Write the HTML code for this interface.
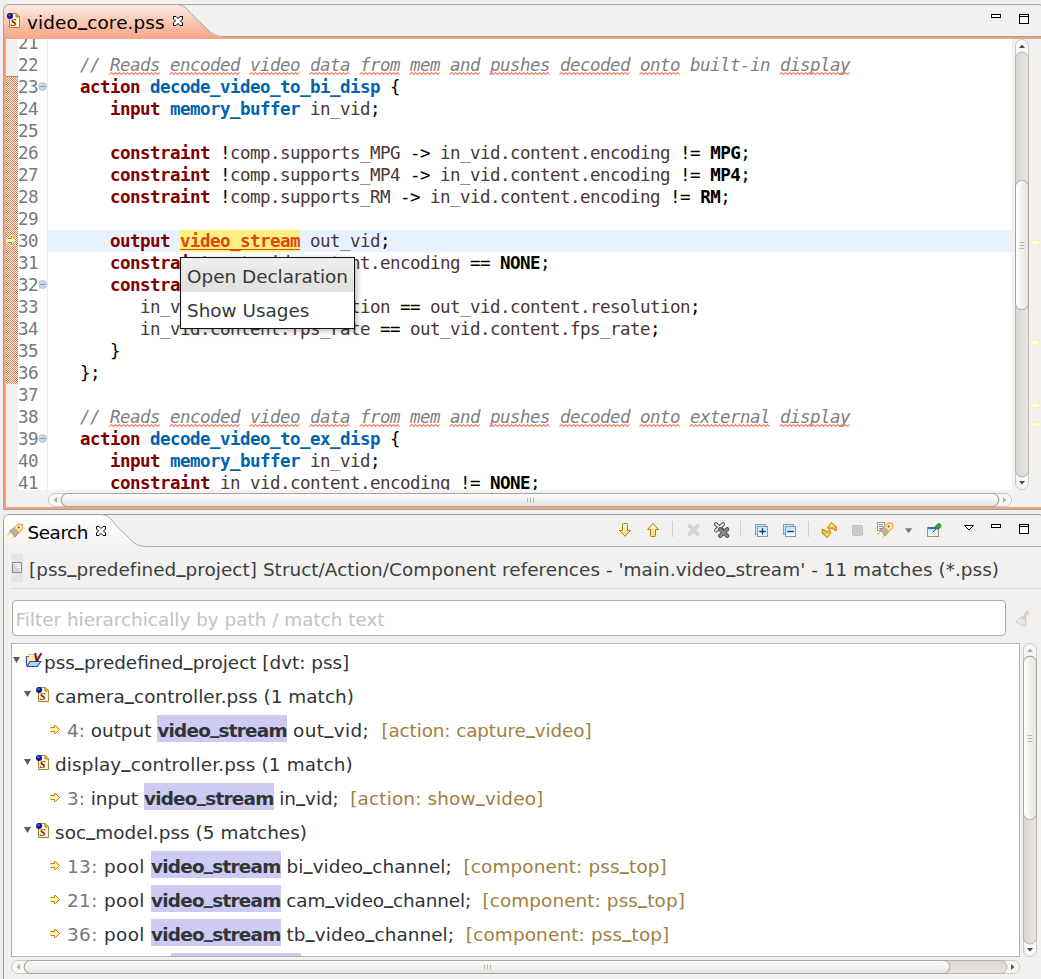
<!DOCTYPE html>
<html lang="en">
<head>
<meta charset="utf-8">
<title>video_core.pss - Search</title>
<style>
*{box-sizing:border-box;margin:0;padding:0}
html,body{width:1041px;height:979px;overflow:hidden;background:#F1F0EE}
body{position:relative;font-family:"DejaVu Sans","Liberation Sans",sans-serif;font-size:18.4px;color:#2f3436}
.abs{position:absolute}
svg{position:absolute;left:0;top:0;overflow:visible}
/* ---------- editor ---------- */
#edwhite{left:18px;top:39px;width:994px;height:451px;background:#fff}
#ruler{left:6px;top:39px;width:12px;height:451px;background:#F1F0EF}
#chg{left:6px;top:76px;width:12px;height:308px;
 background-color:#fff;
 background-image:linear-gradient(45deg,#F0703A 25%,transparent 25%,transparent 75%,#F0703A 75%),linear-gradient(45deg,#F0703A 25%,transparent 25%,transparent 75%,#F0703A 75%);
 background-size:2px 2px;background-position:0 0,1px 1px;border-top:1px solid #F0703A}
#sep{left:47px;top:39px;width:1px;height:451px;background:#ECECEC}
#clip{left:18px;top:39px;width:994px;height:451px;overflow:hidden}
#nums,#code{position:absolute;top:-7px;font-family:"DejaVu Sans Mono","Liberation Mono",monospace;font-size:17.5px;letter-spacing:-0.535px;line-height:22px}
#nums{left:0;width:20px;color:#787878}
#code{left:30px;width:964px;color:#000}
.ln{height:22px;padding-left:2px;white-space:pre}
#nums .ln{padding-left:0}
.cur{background:#E8F2FE}
.k{color:#7F0000}
.t{color:#0064AE}
.c{color:#000}
.i{color:#4A3636}
.m{color:#7F7F7F;font-style:italic}
.hl{color:#D8481C;background:#FFF07E;text-decoration:underline;text-decoration-thickness:1px;text-underline-offset:2px;display:inline-block;height:22px}
/* popup */
#pop{left:180px;top:257px;width:175px;height:72px;background:#fff;border:1px solid #111;box-shadow:2px 2px 6px rgba(0,0,0,.28)}
#pop div{height:34px;line-height:34px;padding:2px 0 0 6px;white-space:pre;color:#33383a}
#pop .sel{background:linear-gradient(#EFEEEC,#E1E0DD)}
/* ---------- search ---------- */
#desc{left:29px;top:553px;line-height:34px;white-space:pre;color:#3a3f41;letter-spacing:.05px}
#descsep{left:11px;top:588px;width:1030px;height:1px;background:#DAD8D5}
#filter{left:12px;top:600px;width:994px;height:36px;border:1px solid #ADA9A3;border-radius:4px;background:#fff;line-height:34px;padding:1.6px 0 0 2.5px;color:#C2C2C2;white-space:pre}
#tree{left:11px;top:643px;width:1009px;height:314px;border:1px solid #B4B0AA;background:#fff;overflow:hidden}
.row{position:absolute;left:0;height:34px;line-height:34px;white-space:pre;color:#2f3436}
.n{color:#777}
.q{color:#A08040}
.u{position:relative;top:-3px;font-weight:bold}
.mt{font-weight:bold;background:#CDCBF3;padding:5px 0 1px 0;letter-spacing:-0.75px}
</style>
</head>
<body>
<!-- ================= EDITOR PANE ================= -->
<svg id="edchrome" width="1041" height="512" viewBox="0 0 1041 512">
 <defs>
  <linearGradient id="tabg" x1="0" y1="0" x2="0" y2="1">
   <stop offset="0" stop-color="#FCEAE2"/><stop offset="1" stop-color="#F5A583"/>
  </linearGradient>
 </defs>
 <!-- pane background -->
 <path d="M3.5,509.5 V11 Q3.5,4.5 10,4.5 H1039 Q1043,4.8 1046,9 V509.5 Z" fill="#F2F1EF" stroke="#A5A29E"/>
 <!-- orange frame -->
 <rect x="4" y="37" width="1037" height="2" fill="#F4A281"/>
 <rect x="4" y="39" width="2" height="470" fill="#F4A281"/>
 <rect x="4" y="507" width="1037" height="2" fill="#F4A281"/>
 <line x1="222" y1="36.5" x2="1041" y2="36.5" stroke="#A0A19E"/>
 <!-- active tab -->
 <path d="M4,39 V11 Q4,5 10,5 H175 C185,5 188,10.5 192,14.5 L205,27 C209,31 213,37 224,37 V39 Z" fill="url(#tabg)"/>
 <path d="M175,4.5 C185,4.5 188,10.5 192,14.5 L205,27 C209,31 213,36.5 224,36.5" fill="none" stroke="#A9A6A2"/>
</svg>
<div class="abs" id="ruler"></div>
<div class="abs" id="edwhite"></div>
<div class="abs" id="chg"></div>
<div class="abs" id="sep"></div>
<div class="abs" id="clip">
<div id="nums">
<div class="ln">21</div>
<div class="ln">22</div>
<div class="ln">23</div>
<div class="ln">24</div>
<div class="ln">25</div>
<div class="ln">26</div>
<div class="ln">27</div>
<div class="ln">28</div>
<div class="ln">29</div>
<div class="ln">30</div>
<div class="ln">31</div>
<div class="ln">32</div>
<div class="ln">33</div>
<div class="ln">34</div>
<div class="ln">35</div>
<div class="ln">36</div>
<div class="ln">37</div>
<div class="ln">38</div>
<div class="ln">39</div>
<div class="ln">40</div>
<div class="ln">41</div>
</div>
<div id="code">
<div class="ln"></div>
<div class="ln">   <i class="m">// Reads encoded video data from mem and pushes decoded onto built-in display</i></div>
<div class="ln">   <b class="k">action</b> <b class="t">decode_video_to_bi_disp</b> {</div>
<div class="ln">      <b class="k">input</b> <b class="t">memory_buffer</b> <span class="i">in_vid</span>;</div>
<div class="ln"></div>
<div class="ln">      <b class="k">constraint</b> !<span class="i">comp.supports_MPG</span> -&gt; <span class="i">in_vid.content.encoding</span> != <b class="c">MPG</b>;</div>
<div class="ln">      <b class="k">constraint</b> !<span class="i">comp.supports_MP4</span> -&gt; <span class="i">in_vid.content.encoding</span> != <b class="c">MP4</b>;</div>
<div class="ln">      <b class="k">constraint</b> !<span class="i">comp.supports_RM</span> -&gt; <span class="i">in_vid.content.encoding</span> != <b class="c">RM</b>;</div>
<div class="ln"></div>
<div class="ln cur">      <b class="k">output</b> <b class="hl">video_stream</b> <span class="i">out_vid</span>;</div>
<div class="ln">      <b class="k">constraint</b> <span class="i">out_vid.content.encoding</span> == <b class="c">NONE</b>;</div>
<div class="ln">      <b class="k">constraint</b> {</div>
<div class="ln">         <span class="i">in_vid.content.resolution</span> == <span class="i">out_vid.content.resolution</span>;</div>
<div class="ln">         <span class="i">in_vid.content.fps_rate</span> == <span class="i">out_vid.content.fps_rate</span>;</div>
<div class="ln">      }</div>
<div class="ln">   };</div>
<div class="ln"></div>
<div class="ln">   <i class="m">// Reads encoded video data from mem and pushes decoded onto external display</i></div>
<div class="ln">   <b class="k">action</b> <b class="t">decode_video_to_ex_disp</b> {</div>
<div class="ln">      <b class="k">input</b> <b class="t">memory_buffer</b> <span class="i">in_vid</span>;</div>
<div class="ln">      <b class="k">constraint</b> <span class="i">in_vid.content.encoding</span> != <b class="c">NONE</b>;</div>
</div>
</div>
<svg id="squig" width="1041" height="512" viewBox="0 0 1041 512" fill="none" stroke="#F68A60" stroke-width="1.15">
<polyline points="109.5,74.5 111.5,72.5 113.5,74.5 115.5,72.5 117.5,74.5 119.5,72.5 121.5,74.5 123.5,72.5 125.5,74.5 127.5,72.5 129.5,74.5 131.5,72.5 133.5,74.5 135.5,72.5 137.5,74.5 139.5,72.5 141.5,74.5 143.5,72.5 145.5,74.5 147.5,72.5 149.5,74.5 151.5,72.5 153.5,74.5 155.5,72.5 157.5,74.5 159.5,72.5"/><polyline points="169.5,74.5 171.5,72.5 173.5,74.5 175.5,72.5 177.5,74.5 179.5,72.5 181.5,74.5 183.5,72.5 185.5,74.5 187.5,72.5 189.5,74.5 191.5,72.5 193.5,74.5 195.5,72.5 197.5,74.5 199.5,72.5 201.5,74.5 203.5,72.5 205.5,74.5 207.5,72.5 209.5,74.5 211.5,72.5 213.5,74.5 215.5,72.5 217.5,74.5 219.5,72.5 221.5,74.5 223.5,72.5 225.5,74.5 227.5,72.5 229.5,74.5 231.5,72.5 233.5,74.5 235.5,72.5 237.5,74.5 239.5,72.5"/><polyline points="249.5,74.5 251.5,72.5 253.5,74.5 255.5,72.5 257.5,74.5 259.5,72.5 261.5,74.5 263.5,72.5 265.5,74.5 267.5,72.5 269.5,74.5 271.5,72.5 273.5,74.5 275.5,72.5 277.5,74.5 279.5,72.5 281.5,74.5 283.5,72.5 285.5,74.5 287.5,72.5 289.5,74.5 291.5,72.5 293.5,74.5 295.5,72.5 297.5,74.5 299.5,72.5"/><polyline points="309.5,74.5 311.5,72.5 313.5,74.5 315.5,72.5 317.5,74.5 319.5,72.5 321.5,74.5 323.5,72.5 325.5,74.5 327.5,72.5 329.5,74.5 331.5,72.5 333.5,74.5 335.5,72.5 337.5,74.5 339.5,72.5 341.5,74.5 343.5,72.5 345.5,74.5 347.5,72.5 349.5,74.5"/><polyline points="359.5,74.5 361.5,72.5 363.5,74.5 365.5,72.5 367.5,74.5 369.5,72.5 371.5,74.5 373.5,72.5 375.5,74.5 377.5,72.5 379.5,74.5 381.5,72.5 383.5,74.5 385.5,72.5 387.5,74.5 389.5,72.5 391.5,74.5 393.5,72.5 395.5,74.5 397.5,72.5 399.5,74.5"/><polyline points="409.5,74.5 411.5,72.5 413.5,74.5 415.5,72.5 417.5,74.5 419.5,72.5 421.5,74.5 423.5,72.5 425.5,74.5 427.5,72.5 429.5,74.5 431.5,72.5 433.5,74.5 435.5,72.5 437.5,74.5 439.5,72.5"/><polyline points="449.5,74.5 451.5,72.5 453.5,74.5 455.5,72.5 457.5,74.5 459.5,72.5 461.5,74.5 463.5,72.5 465.5,74.5 467.5,72.5 469.5,74.5 471.5,72.5 473.5,74.5 475.5,72.5 477.5,74.5 479.5,72.5"/><polyline points="489.5,74.5 491.5,72.5 493.5,74.5 495.5,72.5 497.5,74.5 499.5,72.5 501.5,74.5 503.5,72.5 505.5,74.5 507.5,72.5 509.5,74.5 511.5,72.5 513.5,74.5 515.5,72.5 517.5,74.5 519.5,72.5 521.5,74.5 523.5,72.5 525.5,74.5 527.5,72.5 529.5,74.5 531.5,72.5 533.5,74.5 535.5,72.5 537.5,74.5 539.5,72.5 541.5,74.5 543.5,72.5 545.5,74.5 547.5,72.5 549.5,74.5"/><polyline points="559.5,74.5 561.5,72.5 563.5,74.5 565.5,72.5 567.5,74.5 569.5,72.5 571.5,74.5 573.5,72.5 575.5,74.5 577.5,72.5 579.5,74.5 581.5,72.5 583.5,74.5 585.5,72.5 587.5,74.5 589.5,72.5 591.5,74.5 593.5,72.5 595.5,74.5 597.5,72.5 599.5,74.5 601.5,72.5 603.5,74.5 605.5,72.5 607.5,74.5 609.5,72.5 611.5,74.5 613.5,72.5 615.5,74.5 617.5,72.5 619.5,74.5 621.5,72.5 623.5,74.5 625.5,72.5 627.5,74.5 629.5,72.5"/><polyline points="639.5,74.5 641.5,72.5 643.5,74.5 645.5,72.5 647.5,74.5 649.5,72.5 651.5,74.5 653.5,72.5 655.5,74.5 657.5,72.5 659.5,74.5 661.5,72.5 663.5,74.5 665.5,72.5 667.5,74.5 669.5,72.5 671.5,74.5 673.5,72.5 675.5,74.5 677.5,72.5 679.5,74.5"/><polyline points="779.5,74.5 781.5,72.5 783.5,74.5 785.5,72.5 787.5,74.5 789.5,72.5 791.5,74.5 793.5,72.5 795.5,74.5 797.5,72.5 799.5,74.5 801.5,72.5 803.5,74.5 805.5,72.5 807.5,74.5 809.5,72.5 811.5,74.5 813.5,72.5 815.5,74.5 817.5,72.5 819.5,74.5 821.5,72.5 823.5,74.5 825.5,72.5 827.5,74.5 829.5,72.5 831.5,74.5 833.5,72.5 835.5,74.5 837.5,72.5 839.5,74.5 841.5,72.5 843.5,74.5 845.5,72.5 847.5,74.5 849.5,72.5"/><polyline points="109.5,426.5 111.5,424.5 113.5,426.5 115.5,424.5 117.5,426.5 119.5,424.5 121.5,426.5 123.5,424.5 125.5,426.5 127.5,424.5 129.5,426.5 131.5,424.5 133.5,426.5 135.5,424.5 137.5,426.5 139.5,424.5 141.5,426.5 143.5,424.5 145.5,426.5 147.5,424.5 149.5,426.5 151.5,424.5 153.5,426.5 155.5,424.5 157.5,426.5 159.5,424.5"/><polyline points="169.5,426.5 171.5,424.5 173.5,426.5 175.5,424.5 177.5,426.5 179.5,424.5 181.5,426.5 183.5,424.5 185.5,426.5 187.5,424.5 189.5,426.5 191.5,424.5 193.5,426.5 195.5,424.5 197.5,426.5 199.5,424.5 201.5,426.5 203.5,424.5 205.5,426.5 207.5,424.5 209.5,426.5 211.5,424.5 213.5,426.5 215.5,424.5 217.5,426.5 219.5,424.5 221.5,426.5 223.5,424.5 225.5,426.5 227.5,424.5 229.5,426.5 231.5,424.5 233.5,426.5 235.5,424.5 237.5,426.5 239.5,424.5"/><polyline points="249.5,426.5 251.5,424.5 253.5,426.5 255.5,424.5 257.5,426.5 259.5,424.5 261.5,426.5 263.5,424.5 265.5,426.5 267.5,424.5 269.5,426.5 271.5,424.5 273.5,426.5 275.5,424.5 277.5,426.5 279.5,424.5 281.5,426.5 283.5,424.5 285.5,426.5 287.5,424.5 289.5,426.5 291.5,424.5 293.5,426.5 295.5,424.5 297.5,426.5 299.5,424.5"/><polyline points="309.5,426.5 311.5,424.5 313.5,426.5 315.5,424.5 317.5,426.5 319.5,424.5 321.5,426.5 323.5,424.5 325.5,426.5 327.5,424.5 329.5,426.5 331.5,424.5 333.5,426.5 335.5,424.5 337.5,426.5 339.5,424.5 341.5,426.5 343.5,424.5 345.5,426.5 347.5,424.5 349.5,426.5"/><polyline points="359.5,426.5 361.5,424.5 363.5,426.5 365.5,424.5 367.5,426.5 369.5,424.5 371.5,426.5 373.5,424.5 375.5,426.5 377.5,424.5 379.5,426.5 381.5,424.5 383.5,426.5 385.5,424.5 387.5,426.5 389.5,424.5 391.5,426.5 393.5,424.5 395.5,426.5 397.5,424.5 399.5,426.5"/><polyline points="409.5,426.5 411.5,424.5 413.5,426.5 415.5,424.5 417.5,426.5 419.5,424.5 421.5,426.5 423.5,424.5 425.5,426.5 427.5,424.5 429.5,426.5 431.5,424.5 433.5,426.5 435.5,424.5 437.5,426.5 439.5,424.5"/><polyline points="449.5,426.5 451.5,424.5 453.5,426.5 455.5,424.5 457.5,426.5 459.5,424.5 461.5,426.5 463.5,424.5 465.5,426.5 467.5,424.5 469.5,426.5 471.5,424.5 473.5,426.5 475.5,424.5 477.5,426.5 479.5,424.5"/><polyline points="489.5,426.5 491.5,424.5 493.5,426.5 495.5,424.5 497.5,426.5 499.5,424.5 501.5,426.5 503.5,424.5 505.5,426.5 507.5,424.5 509.5,426.5 511.5,424.5 513.5,426.5 515.5,424.5 517.5,426.5 519.5,424.5 521.5,426.5 523.5,424.5 525.5,426.5 527.5,424.5 529.5,426.5 531.5,424.5 533.5,426.5 535.5,424.5 537.5,426.5 539.5,424.5 541.5,426.5 543.5,424.5 545.5,426.5 547.5,424.5 549.5,426.5"/><polyline points="559.5,426.5 561.5,424.5 563.5,426.5 565.5,424.5 567.5,426.5 569.5,424.5 571.5,426.5 573.5,424.5 575.5,426.5 577.5,424.5 579.5,426.5 581.5,424.5 583.5,426.5 585.5,424.5 587.5,426.5 589.5,424.5 591.5,426.5 593.5,424.5 595.5,426.5 597.5,424.5 599.5,426.5 601.5,424.5 603.5,426.5 605.5,424.5 607.5,426.5 609.5,424.5 611.5,426.5 613.5,424.5 615.5,426.5 617.5,424.5 619.5,426.5 621.5,424.5 623.5,426.5 625.5,424.5 627.5,426.5 629.5,424.5"/><polyline points="639.5,426.5 641.5,424.5 643.5,426.5 645.5,424.5 647.5,426.5 649.5,424.5 651.5,426.5 653.5,424.5 655.5,426.5 657.5,424.5 659.5,426.5 661.5,424.5 663.5,426.5 665.5,424.5 667.5,426.5 669.5,424.5 671.5,426.5 673.5,424.5 675.5,426.5 677.5,424.5 679.5,426.5"/><polyline points="689.5,426.5 691.5,424.5 693.5,426.5 695.5,424.5 697.5,426.5 699.5,424.5 701.5,426.5 703.5,424.5 705.5,426.5 707.5,424.5 709.5,426.5 711.5,424.5 713.5,426.5 715.5,424.5 717.5,426.5 719.5,424.5 721.5,426.5 723.5,424.5 725.5,426.5 727.5,424.5 729.5,426.5 731.5,424.5 733.5,426.5 735.5,424.5 737.5,426.5 739.5,424.5 741.5,426.5 743.5,424.5 745.5,426.5 747.5,424.5 749.5,426.5 751.5,424.5 753.5,426.5 755.5,424.5 757.5,426.5 759.5,424.5 761.5,426.5 763.5,424.5 765.5,426.5 767.5,424.5 769.5,426.5"/><polyline points="779.5,426.5 781.5,424.5 783.5,426.5 785.5,424.5 787.5,426.5 789.5,424.5 791.5,426.5 793.5,424.5 795.5,426.5 797.5,424.5 799.5,426.5 801.5,424.5 803.5,426.5 805.5,424.5 807.5,426.5 809.5,424.5 811.5,426.5 813.5,424.5 815.5,426.5 817.5,424.5 819.5,426.5 821.5,424.5 823.5,426.5 825.5,424.5 827.5,426.5 829.5,424.5 831.5,426.5 833.5,424.5 835.5,426.5 837.5,424.5 839.5,426.5 841.5,424.5 843.5,426.5 845.5,424.5 847.5,426.5 849.5,424.5"/>
</svg>
<div class="abs" style="left:27px;top:8px;line-height:30px;white-space:pre;color:#000;letter-spacing:.13px">video<span class="u">_</span>core.pss</div>
<div class="abs" id="pop"><div class="sel">Open Declaration</div><div>Show Usages</div></div>

<!-- ================= SEARCH PANE ================= -->
<svg id="schrome" width="1041" height="979" viewBox="0 0 1041 979">
 <defs>
  <linearGradient id="stabg" x1="0" y1="0" x2="0" y2="1">
   <stop offset="0" stop-color="#FFFFFF"/><stop offset="1" stop-color="#F4F3F2"/>
  </linearGradient>
 </defs>
 <path d="M3.5,990 V521 Q3.5,514.5 10,514.5 H1039 Q1043,514.8 1046,519 V990 Z" fill="#F2F1EF" stroke="#9D9A97"/>
 <path d="M4,546 V521 Q4,515 10,515 H100 C110,515 112,521 116,525.5 L128,537 C132,541 136,546 147,546 Z" fill="url(#stabg)"/>
 <path d="M100,514.5 C110,514.5 112,521 116,525.5 L128,537 C132,541 136,546.5 147,546.5 H1041" fill="none" stroke="#B0ADA9"/>
</svg>
<div class="abs" style="left:27.5px;top:518px;line-height:30px;white-space:pre;color:#000;letter-spacing:-0.45px">Search</div>
<div class="abs" id="desc">[pss<span class="u">_</span>predefined<span class="u">_</span>project] Struct/Action/Component references - 'main.video<span class="u">_</span>stream' - 11 matches (*.pss)</div>
<div class="abs" id="descsep"></div>
<div class="abs" id="filter">Filter hierarchically by path / match text</div>
<div class="abs" id="tree">
<div class="row" style="left:32px;top:2px">pss<span class="u">_</span>predefined<span class="u">_</span>project [dvt: pss]</div>
<div class="row" style="left:43px;top:36px;letter-spacing:.055px">camera<span class="u">_</span>controller.pss (1 match)</div>
<div class="row" style="left:55px;top:70px"><span class="n">4:</span> output <span class="mt">video<span class="u">_</span>stream</span><span style="letter-spacing:.34px"> out<span class="u">_</span>vid;  </span><span class="q" style="letter-spacing:-.12px">[action: capture<span class="u">_</span>video]</span></div>
<div class="row" style="left:43px;top:104px;letter-spacing:.15px">display<span class="u">_</span>controller.pss (1 match)</div>
<div class="row" style="left:55px;top:138px"><span class="n">3:</span> input <span class="mt">video<span class="u">_</span>stream</span><span style="letter-spacing:-.07px"> in<span class="u">_</span>vid;  </span><span class="q" style="letter-spacing:.16px">[action: show<span class="u">_</span>video]</span></div>
<div class="row" style="left:43px;top:172px;letter-spacing:.045px">soc<span class="u">_</span>model.pss (5 matches)</div>
<div class="row" style="left:55px;top:206px"><span style="letter-spacing:.38px"><span class="n">13:</span> pool </span><span class="mt">video<span class="u">_</span>stream</span><span style="letter-spacing:.04px"> bi<span class="u">_</span>video<span class="u">_</span>channel;  </span><span class="q" style="letter-spacing:.145px">[component: pss<span class="u">_</span>top]</span></div>
<div class="row" style="left:55px;top:240px"><span style="letter-spacing:.38px"><span class="n">21:</span> pool </span><span class="mt">video<span class="u">_</span>stream</span><span style="letter-spacing:-.13px"> cam<span class="u">_</span>video<span class="u">_</span>channel;  </span><span class="q" style="letter-spacing:.1px">[component: pss<span class="u">_</span>top]</span></div>
<div class="row" style="left:55px;top:274px"><span style="letter-spacing:.38px"><span class="n">36:</span> pool </span><span class="mt">video<span class="u">_</span>stream</span><span style="letter-spacing:.055px"> tb<span class="u">_</span>video<span class="u">_</span>channel;  </span><span class="q" style="letter-spacing:.15px">[component: pss<span class="u">_</span>top]</span></div>
<div class="row" style="left:55px;top:308px"><span style="letter-spacing:.18px"><span class="n">41:</span> output </span><span class="mt">video<span class="u">_</span>stream</span> out<span class="u">_</span>vid;  <span class="q">[component: pss<span class="u">_</span>top]</span></div>
</div>
<svg id="icons" width="1041" height="979" viewBox="0 0 1041 979">
<defs><linearGradient id="ya" x1="0" y1="0" x2="0" y2="1"><stop offset="0" stop-color="#FFF8D8"/><stop offset="1" stop-color="#FFD86E"/></linearGradient><linearGradient id="bl" x1="0" y1="0" x2="0" y2="1"><stop offset="0" stop-color="#BFE3FA"/><stop offset="1" stop-color="#F7FCFF"/></linearGradient></defs>
<g transform="translate(7,13)"><path d="M2.5,0.5 H9 L12.5,4 V14.5 H2.5 Z" fill="#FFF6CC" stroke="#A5852F"/><path d="M9,0.5 V4 H12.5 Z" fill="#E6CF84" stroke="#A5852F" stroke-linejoin="round"/><text x="3.6" y="13.2" font-family="'Liberation Serif','DejaVu Serif',serif" font-size="11" font-weight="bold" font-style="italic" fill="#8E1B1B">S</text><circle cx="3" cy="3" r="3" fill="#0A0A96"/><circle cx="2.5" cy="2.4" r="1.3" fill="#5A78B8" opacity=".8"/></g>
<g transform="translate(173,16)"><path d="M0.5,0.5 H3 L5,2.5 L7,0.5 H9.5 V3 L7.5,5 L9.5,7 V9.5 H7 L5,7.5 L3,9.5 H0.5 V7 L2.5,5 L0.5,3 Z" fill="#fff" stroke="#000" stroke-linejoin="round"/></g>
<rect x="990.5" y="13.5" width="11" height="5" fill="#fff" opacity=".8"/><rect x="1018.5" y="13.5" width="11" height="11" fill="#fff" opacity=".8"/><rect x="991.5" y="14.5" width="9" height="3" fill="#fff" stroke="#000"/><rect x="1019.5" y="14.5" width="9" height="9" fill="#fff" stroke="#000"/><line x1="1019" y1="16.5" x2="1029" y2="16.5" stroke="#000"/>
<circle cx="42.7" cy="86.5" r="4" fill="#C9D9EA" stroke="#AABBD0" stroke-width=".8"/><line x1="40.3" y1="86.5" x2="45.1" y2="86.5" stroke="#7E92AA" stroke-width="1"/>
<circle cx="42.7" cy="284.5" r="4" fill="#C9D9EA" stroke="#AABBD0" stroke-width=".8"/><line x1="40.3" y1="284.5" x2="45.1" y2="284.5" stroke="#7E92AA" stroke-width="1"/>
<circle cx="42.7" cy="438.5" r="4" fill="#C9D9EA" stroke="#AABBD0" stroke-width=".8"/><line x1="40.3" y1="438.5" x2="45.1" y2="438.5" stroke="#7E92AA" stroke-width="1"/>
<g transform="translate(7,236)"><path d="M-1,1.5 H3.5 V-1 H6 L11,4.5 L6,10 H3.5 V7.5 H-1 Z" fill="#fff" opacity=".85"/></g>
<g transform="translate(7,236)"><path d="M0,2.5 H4.5 V0.5 H5.5 L9.5,4.5 L5.5,8.5 H4.5 V6.5 H0 Z" fill="#FFF3B0" stroke="none"/><path d="M0.5,2.5 H4.5 V0.5 H5.5 L9.5,4.5 L5.5,8.5 H4.5 V6.5 H0.5" fill="none" stroke="#BF7D0A"/></g>
<rect x="1031.5" y="240.5" width="8" height="4" fill="#FFFDE2" stroke="#FFF29A"/>
<rect x="1031.5" y="340.5" width="8" height="4" fill="#FFFDE2" stroke="#FFF29A"/>
<rect x="1031.5" y="403.5" width="8" height="4" fill="#FFFDE2" stroke="#FFF29A"/>
<rect x="1031.5" y="422.5" width="8" height="4" fill="#FFFDE2" stroke="#FFF29A"/>
<g transform="translate(12.35,534.1) rotate(-43.5)"><path d="M0.3,-3.5 L-4.9,-3 L-3.1,3.4 L0.3,3.6 Z" fill="#FFFBE0"/><path d="M0.3,-3.5 L-4.9,-3 L-4.4,-1.6 L0.3,-2.2 Z" fill="#FBC85A"/><path d="M0.3,3.6 L-3.1,3.4 L-3.5,2.2 L0.3,2.4 Z" fill="#FBD060"/><path d="M0,-3.8 Q1.6,0 0,3.8 L5,3.5 Q6.6,0 5,-3.5 Z" fill="#B7B0C0" stroke="#A58C55" stroke-width=".9"/><path d="M5,-3.4 H11 L14.2,0 L11,3.4 H5 Q6.6,0 5,-3.4 Z" fill="#FCE59C" stroke="#F0A63A" stroke-width="1" stroke-linejoin="round"/><circle cx="9.2" cy="-0.5" r="0.95" fill="#2B4FB0"/></g>
<g transform="translate(96,526)"><path d="M0.5,0.5 H3 L5,2.5 L7,0.5 H9.5 V3 L7.5,5 L9.5,7 V9.5 H7 L5,7.5 L3,9.5 H0.5 V7 L2.5,5 L0.5,3 Z" fill="#fff" stroke="#000" stroke-linejoin="round"/></g>
<rect x="990.5" y="523.5" width="11" height="5" fill="#fff" opacity=".8"/><rect x="1018.5" y="523.5" width="11" height="11" fill="#fff" opacity=".8"/><rect x="991.5" y="524.5" width="9" height="3" fill="#fff" stroke="#000"/><rect x="1019.5" y="524.5" width="9" height="9" fill="#fff" stroke="#000"/><line x1="1019" y1="526.5" x2="1029" y2="526.5" stroke="#000"/>
<path d="M964.5,525.5 H973.5 L969,530 Z" fill="#fff" stroke="#000" stroke-linejoin="miter"/>
<path d="M622.5,524.5 Q622.5,523.5 623.5,523.5 H626.5 Q627.5,523.5 627.5,524.5 V530.5 H630.5 L625,536.3 L619.5,530.5 H622.5 Z" fill="url(#ya)" stroke="#B8790C" stroke-linejoin="round"/>
<path d="M650.5,535.5 Q650.5,536.5 651.5,536.5 H654.5 Q655.5,536.5 655.5,535.5 V529.5 H658.5 L653,523.5 L647.5,529.5 H650.5 Z" fill="url(#ya)" stroke="#B8790C" stroke-linejoin="round"/>
<line x1="672.5" y1="521" x2="672.5" y2="537" stroke="#D2D0CC"/>
<line x1="740.5" y1="521" x2="740.5" y2="537" stroke="#D2D0CC"/>
<line x1="808.5" y1="521" x2="808.5" y2="537" stroke="#D2D0CC"/>
<path d="M689.5,526 L697.5,534 M697.5,526 L689.5,534" stroke="#D6D5D3" stroke-width="4.2" stroke-linecap="round"/>
<path d="M716,524.2 L723,530.5 M723,524.2 L716,530.5" stroke="#4a4a4a" stroke-width="4" stroke-linecap="round"/><path d="M716,524.2 L723,530.5 M723,524.2 L716,530.5" stroke="#E9E9E9" stroke-width="2.2" stroke-linecap="round"/>
<path d="M720.2,529.3 L727.2,535.8 M727.2,529.3 L720.2,535.8" stroke="#444" stroke-width="4.2" stroke-linecap="round"/><path d="M720.2,529.3 L727.2,535.8 M727.2,529.3 L720.2,535.8" stroke="#8C8C8C" stroke-width="2.4" stroke-linecap="round"/>
<rect x="755.5" y="524.5" width="10" height="10" fill="#C6E6FA" stroke="#8D96AD"/><rect x="757.5" y="526.5" width="10" height="10" fill="url(#bl)" stroke="#8D96AD"/><line x1="759.2" y1="531.5" x2="765.8" y2="531.5" stroke="#0B3B70" stroke-width="1.3"/><line x1="762.5" y1="528.2" x2="762.5" y2="534.8" stroke="#0B3B70" stroke-width="1.3"/>
<rect x="783.5" y="524.5" width="10" height="10" fill="#C6E6FA" stroke="#8D96AD"/><rect x="785.5" y="526.5" width="10" height="10" fill="url(#bl)" stroke="#8D96AD"/><line x1="787.2" y1="531.5" x2="793.8" y2="531.5" stroke="#0B3B70" stroke-width="1.3"/>
<g transform="rotate(0 829.3 530)"><path d="M827.4,527.6 L831.4,522.4 L836.6,527 L836.2,531 L833.4,529.4 Q831.6,527.6 829.6,529.4 Z" fill="#F1BE2C" stroke="#B87A0C" stroke-width=".9" stroke-linejoin="round"/><path d="M829.2,526.8 L831.5,523.9 L834.6,526.6 Q831.8,525.2 829.2,526.8 Z" fill="#FFF2B0"/></g><g transform="rotate(180 829.3 530)"><path d="M827.4,527.6 L831.4,522.4 L836.6,527 L836.2,531 L833.4,529.4 Q831.6,527.6 829.6,529.4 Z" fill="#F1BE2C" stroke="#B87A0C" stroke-width=".9" stroke-linejoin="round"/><path d="M829.2,526.8 L831.5,523.9 L834.6,526.6 Q831.8,525.2 829.2,526.8 Z" fill="#FFF2B0"/></g>
<rect x="852.5" y="525.5" width="10" height="10" rx="1.5" fill="#CCC7C5" stroke="#C2BCBA"/><rect x="853.6" y="526.6" width="7.8" height="7.8" rx="1" fill="none" stroke="#D8D4D2" stroke-width=".8"/>
<rect x="877.5" y="522.5" width="7" height="8" fill="#FBFBFF" stroke="#B29A62"/><path d="M879,524.5 H883 M879,526.5 H883 M879,528.5 H882" stroke="#5A78C8" stroke-width=".9"/>
<g transform="translate(882.35,533.1) rotate(-43.5)"><path d="M0.3,-3.5 L-4.9,-3 L-3.1,3.4 L0.3,3.6 Z" fill="#FFFBE0"/><path d="M0.3,-3.5 L-4.9,-3 L-4.4,-1.6 L0.3,-2.2 Z" fill="#FBC85A"/><path d="M0.3,3.6 L-3.1,3.4 L-3.5,2.2 L0.3,2.4 Z" fill="#FBD060"/><path d="M0,-3.8 Q1.6,0 0,3.8 L5,3.5 Q6.6,0 5,-3.5 Z" fill="#B7B0C0" stroke="#A58C55" stroke-width=".9"/><path d="M5,-3.4 H11 L14.2,0 L11,3.4 H5 Q6.6,0 5,-3.4 Z" fill="#FCE59C" stroke="#F0A63A" stroke-width="1" stroke-linejoin="round"/><circle cx="9.2" cy="-0.5" r="0.95" fill="#2B4FB0"/></g>
<path d="M905,528.3 H912.2 L908.6,533.2 Z" fill="#7a7a7a"/>
<rect x="927.5" y="527.5" width="11" height="9" fill="url(#bl)" stroke="#A4935C"/><rect x="928" y="527" width="10" height="2" fill="#3C6CC8"/><line x1="932.8" y1="532.2" x2="936.2" y2="528.6" stroke="#333" stroke-width="1"/><path d="M935,526.6 L937.6,524 Q939.6,523 940.8,524.6 Q941.6,526.4 940,528 L937.6,529.4 Z" fill="#2EA043" stroke="#1E7A30" stroke-width=".7"/>
<rect x="11" y="554" width="12" height="28" fill="#E6E5E3"/><rect x="12.5" y="562.5" width="9" height="10" fill="#D3D5D5" stroke="#8F8F8F"/><path d="M13.3,563.7 H20.8 M15,565.6 H20.8 M17,567.5 H20.8 M18.8,569.4 H20.8 M19.8,571.2 H20.8" stroke="#fff" stroke-width="1"/>
<g opacity=".8"><path d="M1026.5,611 L1028.6,612.4 L1025.2,618 L1023.2,616.8 Z" fill="#D8D4CC" stroke="#B8B2A8" stroke-width=".7"/><path d="M1021.8,616.4 L1026.2,619 L1025.6,626 L1020.4,625 L1015.6,621.6 Z" fill="#E8E4DA" stroke="#BDB7AB" stroke-width=".7"/><path d="M1021.4,617.6 L1026,620" stroke="#B0AAA0" stroke-width=".9"/></g>
<g transform="translate(13,657)"><path d="M0,0 H7 L3.5,6 Z" fill="#5b5b5b"/></g>
<g transform="translate(25,653)"><path d="M1.5,3.5 H3.5 V2.5 Q3.5,1.5 4.5,1.5 H8 Q9,1.5 9,2.5 V3.5 H13.5 V8.5 H5 L2.3,12.6 L1.5,12 Z" fill="#FFE9A6" stroke="#E0AC4A" stroke-width=".8"/><path d="M4.6,2.6 H7.9" stroke="#fff" stroke-width="1"/><path d="M1.5,3.8 V12 L3,13.5 H12.5" fill="none" stroke="#2A44B4" stroke-width="1.1"/><path d="M5,8.5 H16 L12.2,13.5 H2.2 Z" fill="#A9DBFB" stroke="#2A44B4" stroke-width="1.1" stroke-linejoin="round"/><path d="M0.5,3.5 H4" stroke="#7A6A8A" stroke-width="1"/><text x="8.4" y="7.8" font-family="'DejaVu Sans','Liberation Sans',sans-serif" font-size="10.5" font-weight="bold" font-style="italic" fill="#8B0000">V</text></g>
<g transform="translate(24,691)"><path d="M0,0 H7 L3.5,6 Z" fill="#5b5b5b"/></g>
<g transform="translate(36,687)"><path d="M2.5,0.5 H9 L12.5,4 V14.5 H2.5 Z" fill="#FFF6CC" stroke="#A5852F"/><path d="M9,0.5 V4 H12.5 Z" fill="#E6CF84" stroke="#A5852F" stroke-linejoin="round"/><text x="3.6" y="13.2" font-family="'Liberation Serif','DejaVu Serif',serif" font-size="11" font-weight="bold" font-style="italic" fill="#8E1B1B">S</text><circle cx="3" cy="3" r="3" fill="#0A0A96"/><circle cx="2.5" cy="2.4" r="1.3" fill="#5A78B8" opacity=".8"/></g>
<g transform="translate(24,759)"><path d="M0,0 H7 L3.5,6 Z" fill="#5b5b5b"/></g>
<g transform="translate(36,755)"><path d="M2.5,0.5 H9 L12.5,4 V14.5 H2.5 Z" fill="#FFF6CC" stroke="#A5852F"/><path d="M9,0.5 V4 H12.5 Z" fill="#E6CF84" stroke="#A5852F" stroke-linejoin="round"/><text x="3.6" y="13.2" font-family="'Liberation Serif','DejaVu Serif',serif" font-size="11" font-weight="bold" font-style="italic" fill="#8E1B1B">S</text><circle cx="3" cy="3" r="3" fill="#0A0A96"/><circle cx="2.5" cy="2.4" r="1.3" fill="#5A78B8" opacity=".8"/></g>
<g transform="translate(24,827)"><path d="M0,0 H7 L3.5,6 Z" fill="#5b5b5b"/></g>
<g transform="translate(36,823)"><path d="M2.5,0.5 H9 L12.5,4 V14.5 H2.5 Z" fill="#FFF6CC" stroke="#A5852F"/><path d="M9,0.5 V4 H12.5 Z" fill="#E6CF84" stroke="#A5852F" stroke-linejoin="round"/><text x="3.6" y="13.2" font-family="'Liberation Serif','DejaVu Serif',serif" font-size="11" font-weight="bold" font-style="italic" fill="#8E1B1B">S</text><circle cx="3" cy="3" r="3" fill="#0A0A96"/><circle cx="2.5" cy="2.4" r="1.3" fill="#5A78B8" opacity=".8"/></g>
<g transform="translate(50,725)"><path d="M0,2.5 H4.5 V0.5 H5.5 L9.5,4.5 L5.5,8.5 H4.5 V6.5 H0 Z" fill="#FFF3B0" stroke="none"/><path d="M0.5,2.5 H4.5 V0.5 H5.5 L9.5,4.5 L5.5,8.5 H4.5 V6.5 H0.5" fill="none" stroke="#BF7D0A"/></g>
<g transform="translate(50,793)"><path d="M0,2.5 H4.5 V0.5 H5.5 L9.5,4.5 L5.5,8.5 H4.5 V6.5 H0 Z" fill="#FFF3B0" stroke="none"/><path d="M0.5,2.5 H4.5 V0.5 H5.5 L9.5,4.5 L5.5,8.5 H4.5 V6.5 H0.5" fill="none" stroke="#BF7D0A"/></g>
<g transform="translate(50,861)"><path d="M0,2.5 H4.5 V0.5 H5.5 L9.5,4.5 L5.5,8.5 H4.5 V6.5 H0 Z" fill="#FFF3B0" stroke="none"/><path d="M0.5,2.5 H4.5 V0.5 H5.5 L9.5,4.5 L5.5,8.5 H4.5 V6.5 H0.5" fill="none" stroke="#BF7D0A"/></g>
<g transform="translate(50,895)"><path d="M0,2.5 H4.5 V0.5 H5.5 L9.5,4.5 L5.5,8.5 H4.5 V6.5 H0 Z" fill="#FFF3B0" stroke="none"/><path d="M0.5,2.5 H4.5 V0.5 H5.5 L9.5,4.5 L5.5,8.5 H4.5 V6.5 H0.5" fill="none" stroke="#BF7D0A"/></g>
<g transform="translate(50,929)"><path d="M0,2.5 H4.5 V0.5 H5.5 L9.5,4.5 L5.5,8.5 H4.5 V6.5 H0 Z" fill="#FFF3B0" stroke="none"/><path d="M0.5,2.5 H4.5 V0.5 H5.5 L9.5,4.5 L5.5,8.5 H4.5 V6.5 H0.5" fill="none" stroke="#BF7D0A"/></g>
</svg>

<svg id="scroll" width="1041" height="979" viewBox="0 0 1041 979">
<defs>
<linearGradient id="str" x1="0" y1="0" x2="1" y2="0"><stop offset="0" stop-color="#D9D7D3"/><stop offset="1" stop-color="#E6E5E3"/></linearGradient>
<linearGradient id="sth" x1="0" y1="0" x2="1" y2="0"><stop offset="0" stop-color="#FFFFFF"/><stop offset="1" stop-color="#E4E2DF"/></linearGradient>
<linearGradient id="shtr" x1="0" y1="0" x2="0" y2="1"><stop offset="0" stop-color="#D9D7D3"/><stop offset="1" stop-color="#E6E5E3"/></linearGradient>
<linearGradient id="shth" x1="0" y1="0" x2="0" y2="1"><stop offset="0" stop-color="#FFFFFF"/><stop offset="1" stop-color="#E4E2DF"/></linearGradient>
</defs>
<rect x="1015.5" y="39.5" width="13" height="450" rx="6.5" fill="#F8F8F7" stroke="#CCC8C3"/><rect x="1015.5" y="52" width="13" height="425" rx="6.5" fill="url(#str)" stroke="#B9B4AE"/><rect x="1015.5" y="180.5" width="13" height="129" rx="6" fill="url(#sth)" stroke="#A8A39D"/><line x1="1019.5" y1="242.5" x2="1024.5" y2="242.5" stroke="#B9B5B0"/><line x1="1019.5" y1="245.5" x2="1024.5" y2="245.5" stroke="#B9B5B0"/><line x1="1019.5" y1="248.5" x2="1024.5" y2="248.5" stroke="#B9B5B0"/><path d="M1019,48 H1025 L1022,44.6 Z" fill="#4d4d4d"/><path d="M1019,481 H1025 L1022,484.4 Z" fill="#4d4d4d"/>
<rect x="48.5" y="493.5" width="963" height="13" rx="6.5" fill="#F8F8F7" stroke="#CCC8C3"/><rect x="61" y="493.5" width="938" height="13" rx="6.5" fill="url(#shtr)" stroke="#B9B4AE"/><rect x="61.5" y="493.5" width="937" height="13" rx="6" fill="url(#shth)" stroke="#A8A39D"/><line x1="527.5" y1="497.5" x2="527.5" y2="502.5" stroke="#B9B5B0"/><line x1="530.5" y1="497.5" x2="530.5" y2="502.5" stroke="#B9B5B0"/><line x1="533.5" y1="497.5" x2="533.5" y2="502.5" stroke="#B9B5B0"/><path d="M57,497 V503 L53.6,500 Z" fill="#ADADAD"/><path d="M1003,497 V503 L1006.4,500 Z" fill="#ADADAD"/>
<rect x="1023.5" y="643.5" width="13" height="313" rx="6.5" fill="#F8F8F7" stroke="#CCC8C3"/><rect x="1023.5" y="656" width="13" height="288" rx="6.5" fill="url(#str)" stroke="#B9B4AE"/><rect x="1023.5" y="656.5" width="13" height="163" rx="6" fill="url(#sth)" stroke="#A8A39D"/><line x1="1027.5" y1="735.5" x2="1032.5" y2="735.5" stroke="#B9B5B0"/><line x1="1027.5" y1="738.5" x2="1032.5" y2="738.5" stroke="#B9B5B0"/><line x1="1027.5" y1="741.5" x2="1032.5" y2="741.5" stroke="#B9B5B0"/><path d="M1027,652 H1033 L1030,648.6 Z" fill="#ADADAD"/><path d="M1027,948 H1033 L1030,951.4 Z" fill="#4d4d4d"/>
<rect x="11.5" y="960.5" width="1008" height="13" rx="6.5" fill="#F8F8F7" stroke="#CCC8C3"/><rect x="24" y="960.5" width="983" height="13" rx="6.5" fill="url(#shtr)" stroke="#B9B4AE"/><rect x="24.5" y="960.5" width="925" height="13" rx="6" fill="url(#shth)" stroke="#A8A39D"/><line x1="484.5" y1="964.5" x2="484.5" y2="969.5" stroke="#B9B5B0"/><line x1="487.5" y1="964.5" x2="487.5" y2="969.5" stroke="#B9B5B0"/><line x1="490.5" y1="964.5" x2="490.5" y2="969.5" stroke="#B9B5B0"/><path d="M20,964 V970 L16.6,967 Z" fill="#ADADAD"/><path d="M1011,964 V970 L1014.4,967 Z" fill="#4d4d4d"/>
</svg>

</body>
</html>
